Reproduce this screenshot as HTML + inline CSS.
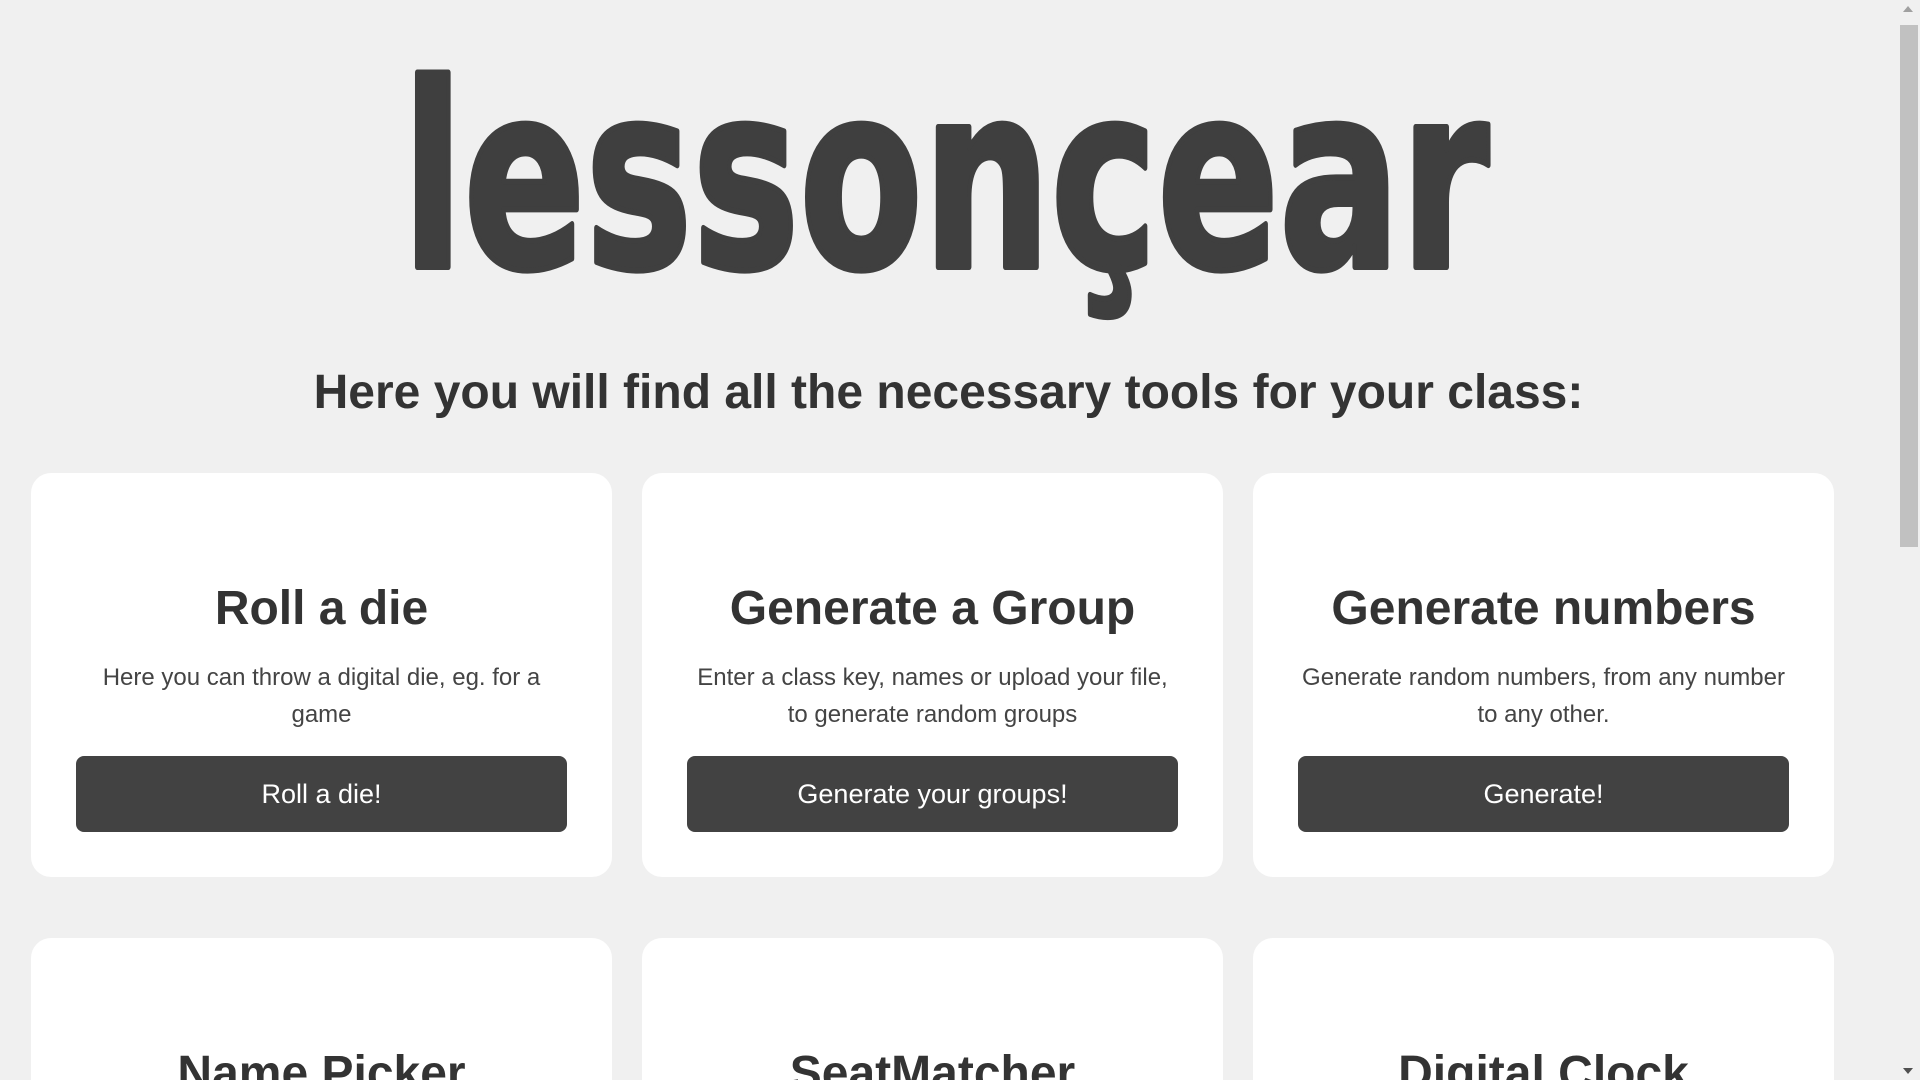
<!DOCTYPE html>
<html><head><meta charset="utf-8"><style>
html,body{margin:0;padding:0;width:1920px;height:1080px;overflow:hidden;background:#f0f0f0;font-family:"Liberation Sans",Arial,sans-serif;color:#333}
#wrap{position:relative;width:1920px;height:1080px;overflow:hidden}
.logo{position:absolute;left:0;top:0}
h1{position:absolute;left:0;width:1897px;top:365px;margin:0;text-align:center;font-size:48px;font-weight:bold;color:#333}
.card{position:absolute;width:581px;height:404px;background:#fff;border-radius:20px;text-align:center}
.card h2{position:absolute;left:0;right:0;top:108px;margin:0;font-size:48px;font-weight:bold;color:#333}
.card p{position:absolute;left:48px;right:48px;top:187px;margin:0;font-size:24px;line-height:36.5px;color:#444}
.card .btn{position:absolute;left:45px;right:45px;top:283px;height:76px;background:#424242;color:#fff;border-radius:8px;font-size:27px;line-height:76px}
.sb{position:absolute;left:1897px;top:0;width:23px;height:1080px;background:#f0f0f0}
.thumb{position:absolute;left:1900px;top:25px;width:18px;height:522px;background:#c1c1c1}
</style></head><body><div id="wrap">
<svg class="logo" width="1897" height="340">
<text x="402" y="267" font-family="DejaVu Sans, sans-serif" font-weight="bold" font-size="256" fill="#3f3f3f" stroke="#3f3f3f" stroke-width="6" stroke-linejoin="round" textLength="1087" lengthAdjust="spacingAndGlyphs">lessonçear</text>
</svg>
<h1>Here you will find all the necessary tools for your class:</h1>
<div class="card" style="left:31px;top:473px"><h2>Roll a die</h2><p>Here you can throw a digital die, eg. for a game</p><div class="btn">Roll a die!</div></div>
<div class="card" style="left:642px;top:473px"><h2>Generate a Group</h2><p>Enter a class key, names or upload your file, to generate random groups</p><div class="btn">Generate your groups!</div></div>
<div class="card" style="left:1253px;top:473px"><h2>Generate numbers</h2><p>Generate random numbers, from any number to any other.</p><div class="btn">Generate!</div></div>
<div class="card" style="left:31px;top:938px"><h2>Name Picker</h2></div>
<div class="card" style="left:642px;top:938px"><h2>SeatMatcher</h2></div>
<div class="card" style="left:1253px;top:938px"><h2>Digital Clock</h2></div>
<div class="sb"></div><div class="thumb"></div>
<div style="position:absolute;left:1903px;top:6px;width:0;height:0;border-left:5px solid transparent;border-right:5px solid transparent;border-bottom:6px solid #a0a0a0"></div>
<div style="position:absolute;left:1903px;top:1068px;width:0;height:0;border-left:5px solid transparent;border-right:5px solid transparent;border-top:6px solid #505050"></div>
</div></body></html>
